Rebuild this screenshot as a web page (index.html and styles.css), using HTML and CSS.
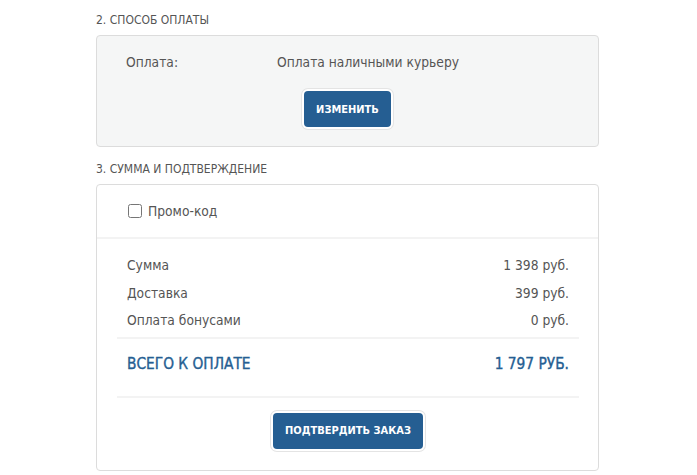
FILE: index.html
```html
<!DOCTYPE html>
<html lang="ru">
<head>
	<meta charset="UTF-8">
	<title>Оформление заказа</title>
	<link rel="stylesheet" href="styles.css">
</head>
<body>

	<div class="checkout">
		<div class="step-title">2. Способ оплаты</div>
		<div class="step-box step-box-gray">
			<div class="pay-row">
				<div class="pay-label">Оплата:</div>
				<div class="pay-value">Оплата наличными курьеру</div>
			</div>
			<div class="btn-line">
				<button class="btn">Изменить</button>
			</div>
		</div>

		<div class="step-title">3. Сумма и подтверждение</div>
		<div class="step-box">
			<div class="promo">
				<label><input type="checkbox" class="promo-check"> Промо-код</label>
			</div>
			<div class="summary">
				<div class="sum-rows">
					<div class="sum-row"><span>Сумма</span><span>1 398 руб.</span></div>
					<div class="sum-row"><span>Доставка</span><span>399 руб.</span></div>
					<div class="sum-row"><span>Оплата бонусами</span><span>0 руб.</span></div>
				</div>
				<div class="sum-total">
					<span>Всего к оплате</span><span>1 797 руб.</span>
				</div>
				<div class="btn-line btn-line-confirm">
					<button class="btn">Подтвердить заказ</button>
				</div>
			</div>
		</div>
	</div>

</body>
</html>
```

FILE: styles.css
```css
body {
	margin: 0;
	font-family: "DejaVu Sans Condensed", "DejaVu Sans", sans-serif;
	color: #555;
	background: #fff;
}
.checkout {
	margin-left: 96px;
	width: 503px;
	padding-top: 14px;
}
.step-title {
	font-size: 12px;
	line-height: 13px;
	text-transform: uppercase;
	margin-bottom: 8px;
}
.step-box {
	border: 1px solid #dcdcdc;
	border-radius: 4px;
	background: #fff;
}
.step-box-gray {
	background: #f5f6f6;
	padding: 16px 0 19px;
	margin-bottom: 16px;
}

.pay-row {
	display: flex;
	padding-left: 29px;
	font-size: 13.7px;
	line-height: 20px;
}
.pay-label {
	width: 151px;
}
.btn-line {
	display: flex;
	justify-content: center;
	margin-top: 19px;
}
.btn {
	background: #255e92;
	color: #fff;
	border: 0;
	border-radius: 4px;
	height: 36px;
	padding: 0 12px;
	font-family: inherit;
	font-size: 11px;
	font-weight: bold;
	text-transform: uppercase;
	box-shadow: 0 0 0 2px #fff, 0 0 0 3px #e4e4e4;
}

.promo {
	height: 52px;
	padding-left: 31px;
	display: flex;
	align-items: center;
	border-bottom: 2px solid #f3f3f3;
	font-size: 13.7px;
}
.promo label {
	display: flex;
	align-items: center;
}
.promo-check {
	margin: 0 6px 0 0;
	width: 14px;
	height: 14px;
}
.summary {
	padding: 13px 19px 21px 20px;
}
.sum-rows {
	padding-bottom: 2px;
	border-bottom: 2px solid #f3f3f3;
}
.sum-row {
	display: flex;
	justify-content: space-between;
	padding: 0 10px;
	font-size: 13.7px;
	line-height: 27.5px;
}
.sum-total {
	display: flex;
	justify-content: space-between;
	padding: 17px 10px 24px;
	line-height: 16px;
	border-bottom: 2px solid #f3f3f3;
	font-size: 15.3px;
	color: #255e92;
	-webkit-text-stroke: 0.35px #255e92;
	text-transform: uppercase;
}
.btn-line-confirm {
	margin-top: 15px;
}
```
